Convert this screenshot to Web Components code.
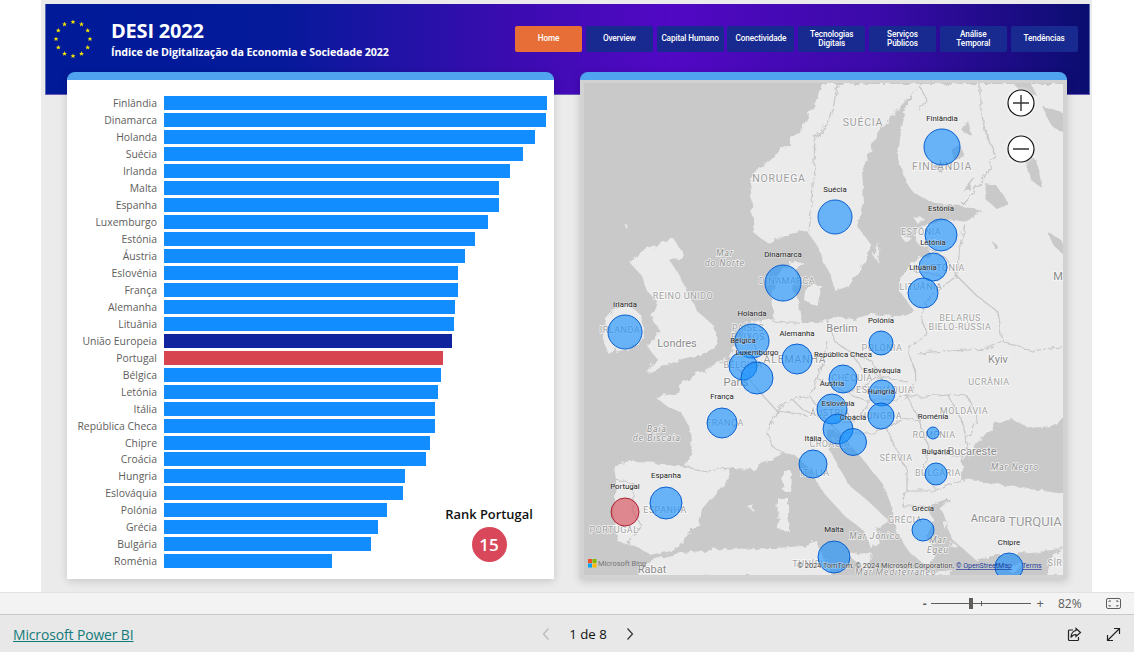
<!DOCTYPE html>
<html lang="pt">
<head>
<meta charset="utf-8">
<title>DESI 2022</title>
<style>
  html, body { margin: 0; height: 100%; background: #fff; overflow: hidden; }
  body { font-family: "Open Sans", "Noto Sans", sans-serif; }
</style>
</head>
<body>
<report-page>
  <desi-header slot="header"></desi-header>
  <bar-chart slot="left"></bar-chart>
  <europe-map slot="right"></europe-map>
  <zoom-bar slot="zoom"></zoom-bar>
  <report-footer slot="footer"></report-footer>
</report-page>

<script>
// components/ReportPage.js
class ReportPage extends HTMLElement {
  constructor() {
    super();
    this.attachShadow({ mode: 'open' });
    this.shadowRoot.innerHTML = `
      <style>
        :host { display: flex; flex-direction: column; height: 652px; }
        .canvas {
          height: 592px;
          margin: 0 42px 0 41px;
          background: #ebebeb;
          padding: 4px 2px 0 4px;
          box-sizing: border-box;
          overflow: hidden;
        }
        .panels {
          display: flex;
          gap: 26px;
          margin-top: -23px;
          padding-left: 22px;
          position: relative;
        }
      </style>
      <div class="canvas">
        <slot name="header"></slot>
        <div class="panels">
          <slot name="left"></slot>
          <slot name="right"></slot>
        </div>
      </div>
      <slot name="zoom"></slot>
      <slot name="footer"></slot>
    `;
  }
}

class DesiHeader extends HTMLElement {
  constructor() {
    super();
    this.attachShadow({ mode: 'open' });
    const stars = [];
    for (let i = 0; i < 12; i++) {
      const a = i * Math.PI / 6;
      stars.push(`<use href="#star" x="${(19 + 17 * Math.sin(a)).toFixed(1)}" y="${(19 - 17 * Math.cos(a)).toFixed(1)}"/>`);
    }
    const items = [['Home', 1], ['Overview'], ['Capital Humano'], ['Conectividade'], ['Tecnologias<br>Digitais'],
      ['Serviços<br>Públicos'], ['Análise<br>Temporal'], ['Tendências']];
    this.shadowRoot.innerHTML = `
      <style>
        :host {
          display: flex;
          align-items: flex-start;
          height: 91px;
          box-sizing: border-box;
          background: linear-gradient(90deg, #001a98 0%, #041a9a 22%, #3a0cb0 44%, #5208c4 60%, #3a0aa8 80%, #0a0d70 100%);
          border-left: 1px solid #5a6ab0;
          border-right: 1px solid #5a6ab0;
          border-bottom: 1px solid #6a5ab8;
          color: #fff;
        }
        svg { flex: none; width: 38px; height: 38px; margin: 16px 0 0 8px; fill: #f7e600; }
        .titles { margin: 16px 0 0 19px; width: 404px; flex: none; }
        h1 { margin: 0; font: 700 20px/22px "Open Sans", sans-serif; letter-spacing: -0.2px; }
        p { margin: 3px 0 0 0; font: 700 10.7px/15px "Open Sans", sans-serif; letter-spacing: -0.1px; white-space: nowrap; }
        nav { display: flex; gap: 3.8px; margin-top: 22px; }
      </style>
      <svg viewBox="0 0 38 38"><defs><path id="star" d="M0-2.6 .7-.8 2.5-.8 1.1 .3 1.6 2.1 0 1 -1.6 2.1 -1.1 .3 -2.5 -.8 -.7 -.8Z"/></defs>${stars.join('')}</svg>
      <div class="titles">
        <h1>DESI 2022</h1>
        <p>Índice de Digitalização da Economia e Sociedade 2022</p>
      </div>
      <nav>${items.map(i => `<nav-button ${i[1] ? 'active' : ''}>${i[0]}</nav-button>`).join('')}</nav>
    `;
  }
}

class NavButton extends HTMLElement {
  constructor() {
    super();
    this.attachShadow({ mode: 'open' });
    this.shadowRoot.innerHTML = `
      <style>
        :host {
          display: flex;
          align-items: center;
          justify-content: center;
          width: 67px;
          height: 26px;
          border-radius: 2px;
          background: #182a90;
          color: #fff;
          font: 500 8.2px/9.5px Roboto, sans-serif;
          letter-spacing: -0.1px;
          text-align: center;
        }
        :host([active]) { background: #e76f37; }
      </style>
      <slot></slot>
    `;
  }
}

class BarChart extends HTMLElement {
  constructor() {
    super();
    this.attachShadow({ mode: 'open' });
    const data = [['Finlândia', 547], ['Dinamarca', 546], ['Holanda', 535], ['Suécia', 523], ['Irlanda', 510], ['Malta', 499],
      ['Espanha', 499], ['Luxemburgo', 488], ['Estónia', 475], ['Áustria', 465], ['Eslovénia', 458], ['França', 458],
      ['Alemanha', 455], ['Lituânia', 454], ['União Europeia', 452, 'eu'], ['Portugal', 443, 'pt'], ['Bélgica', 441],
      ['Letónia', 438], ['Itália', 435], ['República Checa', 435], ['Chipre', 430], ['Croácia', 426], ['Hungria', 405],
      ['Eslováquia', 403], ['Polónia', 387], ['Grécia', 378], ['Bulgária', 371], ['Roménia', 332]];
    this.shadowRoot.innerHTML = `
      <style>
        :host {
          display: block;
          position: relative;
          flex: none;
          width: 487px;
          height: 507px;
          box-sizing: border-box;
          background: #fff;
          border-top: 8px solid #4fa3ef;
          border-radius: 8px 8px 0 0;
          box-shadow: 0 2px 9px rgba(0,0,0,.16);
          padding-top: 15px;
        }
        .rows { display: grid; grid-template-columns: 90px 1fr; column-gap: 7px; grid-auto-rows: 16.96px; align-items: center; }
        .label { text-align: right; font: 400 10.4px/14px "Open Sans", sans-serif; color: #605e5c; white-space: nowrap; }
        .bar { height: 14px; background: #118dff; }
        .bar.eu { background: #12239e; }
        .bar.pt { background: #d64550; }
        .rank { position: absolute; left: 370px; top: 426px; width: 104px; text-align: center; }
        .rank b { display: block; font: 600 12.9px/17px "Open Sans", sans-serif; color: #111; white-space: nowrap; }
        .rank span {
          display: flex; align-items: center; justify-content: center;
          width: 35px; height: 35px; margin: 4px auto 0;
          border-radius: 50%; background: #d9485a; color: #fff;
          font: 600 17px/1 "Open Sans", sans-serif;
        }
      </style>
      <div class="rows">
        ${data.map(d => `<div class="label">${d[0]}</div><div class="bar ${d[2] || ''}" style="width:${d[1] - 164}px"></div>`).join('')}
      </div>
      <div class="rank"><b>Rank Portugal</b><span>15</span></div>
    `;
  }
}

class EuropeMap extends HTMLElement {
  constructor() {
    super();
    this.attachShadow({ mode: 'open' });
    const land = [
      // mainland
      'M917 83 905 105 899 130 896 155 903 180 913 193 935 203 960 205 980 210 968 220 950 218 927 222 912 232 916 243 925 246 930 255 915 258 908 262 900 275 897 290 905 300 912 310 895 316 870 313 850 318 830 316 812 322 800 322 798 312 797 300 790 288 795 272 800 260 788 262 775 275 770 295 772 318 750 322 738 338 727 358 715 362 698 372 680 380 677 392 653 396 665 405 680 412 688 430 690 450 683 466 660 462 630 461 612 464 614 480 613 495 612 520 615 540 632 544 650 555 668 550 682 540 697 524 700 508 715 490 728 478 727 467 750 468 770 458 782 452 795 456 808 468 820 490 843 515 862 530 870 548 878 542 874 528 887 520 866 500 848 485 836 465 826 445 825 428 838 432 858 455 880 482 890 505 894 530 908 552 925 565 932 555 925 535 932 520 925 505 945 498 958 500 968 490 960 478 960 462 977 440 993 423 1010 418 1027 427 1050 425 1063 417 1063 83Z',
      // norway + sweden
      'M820 83 812 105 800 127 782 147 765 160 748 178 750 205 752 232 767 243 787 233 805 230 815 245 826 270 833 290 847 285 862 262 870 245 855 225 862 203 860 170 873 137 897 107 917 85 917 83Z',
      // turkey
      'M947 500 963 478 1000 484 1063 493 1063 547 1030 552 997 553 975 560 950 538 945 520 938 507Z',
      // great britain
      'M670 236 655 245 640 250 628 262 640 275 645 290 655 300 650 318 658 330 645 345 655 358 645 372 680 358 700 353 716 345 712 325 695 310 685 290 678 275 668 260 682 255 680 250Z',
      // ireland
      'M622 303 607 312 601 335 606 352 628 348 642 335 640 315 632 308Z',
      // north africa
      'M636 575 647 560 665 555 680 552 720 548 775 547 800 545 815 540 820 555 830 575Z',
      // islands
      'M845 553 870 552 865 570Z', 'M776 497 787 497 787 530 775 528Z', 'M782 470 789 470 788 491 781 490Z',
      'M1000 566 1022 561 1012 572Z', 'M920 572 950 569 948 574 922 575Z', 'M1050 552 1063 548 1063 575 1045 575Z',
      'M872 255 878 240 876 262Z', 'M805 285 820 285 815 305 803 300Z', 'M745 505 752 503 750 509Z', 'M622 224 626 222 625 228Z',
      'M910 215 922 217 916 223Z', 'M900 236 908 235 905 243Z', 'M940 520 946 522 944 530Z', 'M950 540 955 545 948 546Z'
    ];
    const lakes = [
      'M983 183 995 185 1007 203 995 208 985 200Z', 'M1023 150 1035 160 1040 187 1030 180 1025 168Z',
      'M1040 105 1063 112 1063 132 1050 125Z', 'M1012 83 1030 83 1035 95 1022 95Z', 'M960 190 972 175 968 188Z',
      'M950 150 958 145 962 155 952 160Z', 'M930 165 945 160 938 172Z', 'M960 130 966 120 970 135Z',
      'M1045 230 1060 240 1063 255 1052 245Z', 'M990 240 996 245 992 248Z'
    ];
    const borders = [
      'M835 83 832 103 828 120 813 137 812 163 810 203 807 230', 'M917 85 925 100 918 110',
      'M978 83 978 103 983 130 993 153 982 177 960 203', 'M962 222 958 245 955 275 975 295 995 310 1000 340',
      'M925 246 945 258 955 275', 'M912 270 940 275', 'M955 275 945 282 925 300 920 318 925 335 905 345 915 380',
      'M915 352 945 350 985 348 1000 340 1030 350 1063 345', 'M915 380 905 395 925 395 945 393 965 395 975 415 965 440',
      'M945 393 960 420 965 440 960 462', 'M895 400 905 395 918 420 928 452 960 455', 'M918 420 898 418 885 428 895 450 905 470 905 490',
      'M905 490 935 490 960 478', 'M905 490 900 505 925 505', 'M928 452 920 470 935 490',
      'M825 318 832 340 850 352 870 360 878 375 905 380', 'M850 352 860 368 878 375 868 382 845 392 830 385 815 378 822 355 825 340',
      'M845 392 865 400 880 398 895 400', 'M815 378 808 395 790 398 775 410 765 432 770 445 782 452',
      'M775 410 755 388 745 375 730 365 718 362', 'M745 375 755 360 752 340 745 330', 'M808 395 825 420 852 420 865 408 865 400',
      'M825 420 838 432 870 432 885 428', 'M682 466 705 470 727 467', 'M612 478 632 482 630 510 640 525 625 542',
      'M790 398 800 408 825 420', 'M775 410 790 412 805 415', 'M770 320 785 322 798 322'
    ];
    const L = (x, y, t, cls) => `<text x="${x}" y="${y}" class="${cls || 'c'}">${t}</text>`;
    const names = [
      [863,126,'SUÉCIA','m'],[779,182,'NORUEGA','m'],[942,170,'FINLÂNDIA','m'],[683,299,'REINO UNIDO'],[787,284,'DINAMARCA'],
      [620,333,'IRLANDA'],[677,347,'Londres','t'],[842,332,'Berlim','t'],[736,386,'Paris','t'],[748,331,'PAÍSES'],[748,340,'BAIXOS'],
      [795,363,'ALEMANHA','m'],[743,368,'BÉLGICA'],[725,426,'FRANÇA'],[665,513,'ESPANHA'],[614,533,'PORTUGAL'],
      [815,476,'ITÁLIA'],[830,447,'CROÁCIA'],[830,416,'ÁUSTRIA'],[852,381,'CHÉQUIA'],[885,393,'ESLOVÁQUIA'],[881,419,'HUNGRIA'],
      [882,351,'POLÓNIA'],[960,321,'BELARUS'],[960,330,'BIELO-RÚSSIA'],[921,235,'ESTÓNIA'],[945,271,'LETÓNIA'],[921,290,'LITUÂNIA'],
      [998,363,'Kyiv','t'],[989,385,'UCRÂNIA'],[964,414,'MOLDÁVIA'],[934,438,'ROMÉNIA'],[972,455,'Bucareste','t'],[896,461,'SÉRVIA'],
      [938,476,'BULGÁRIA'],[905,523,'GRÉCIA'],[988,522,'Ancara','t'],[1035,526,'TURQUIA','b'],[652,573,'Rabat','t'],[811,567,'TUNÍSIA'],
      [1058,280,'M','t'],[1055,566,'SÍR'],
      [725,256,'Mar','i'],[725,266,'do Norte','i'],[657,432,'Baía','i'],[657,441,'de Biscaia','i'],[1015,470,'Mar Negro','i'],
      [875,539,'Mar Jônico','i'],[938,543,'Mar','i'],[938,553,'Egeu','i'],[896,575,'Mar Mediterrâneo','i']
    ];
    const bubbles = [
      ['Finlândia',942,147,18,118],['Suécia',835,217,17,189],['Dinamarca',783,283,18,254],['Irlanda',625,332,17,304],
      ['Holanda',752,341,17,313],['Bélgica',743,366,14,340],['Luxemburgo',757,378,16,352],['Alemanha',797,359,15,333],
      ['República Checa',843,379,14,354],['Polónia',881,343,12,320],['Estónia',941,235,16,208],['Letónia',933,267,14,242],
      ['Lituânia',923,293,15,267],['Áustria',832,409,15,383],['Eslovénia',838,429,15,403],['Croácia',853,442,13.5,417],
      ['Eslováquia',882,393,13,370],['Hungria',881,416,13,391],['Roménia',933,433,6,416],['Bulgária',936,474,11,451],
      ['Grécia',923,530,11,508],['Itália',813,464,14,438],['França',722,423,15,396],['Espanha',666,503,16,475],
      ['Portugal',625,512,14,486,'pt'],['Malta',834,557,16,529],['Chipre',1009,567,14,542]
    ];
    this.shadowRoot.innerHTML = `
      <style>
        :host {
          display: block;
          flex: none;
          width: 487px;
          height: 507px;
          box-sizing: border-box;
          background: #d2d2d2;
          border-top: 8px solid #4fa3ef;
          border-radius: 8px 8px 0 0;
          box-shadow: 0 2px 9px rgba(0,0,0,.18);
        }
        svg { display: block; width: 487px; height: 499px; }
        text { font-family: Roboto, sans-serif; text-anchor: middle; paint-order: stroke; stroke: rgba(255,255,255,.75); stroke-width: 1.5px; }
        .c { font-size: 9px; letter-spacing: .5px; fill: #a2a2a2; }
        .m { font-size: 10.5px; letter-spacing: .8px; fill: #9c9c9c; }
        .t { font-size: 11px; fill: #8a8a8a; }
        .b { font-size: 13px; fill: #999; }
        .i { font-size: 8.5px; letter-spacing: 1px; font-style: italic; fill: #8f8f8f; }
        .n { font-size: 7.8px; fill: #222; stroke: rgba(255,255,255,.45); stroke-width: 1px; }
        .border { fill: none; stroke: #c6c6c6; stroke-width: 1.2; stroke-linejoin: round; }
        .bubble { fill: #118dff; fill-opacity: .6; stroke: #0a5fd0; stroke-width: 1; }
        .bubble.pt { fill: #d64550; stroke: #ab2334; }
        .copy { font-size: 7.3px; text-anchor: end; fill: #444; stroke: rgba(255,255,255,.6); stroke-width: 1px; }
        .link { font-size: 7px; text-anchor: start; fill: #1a3a9c; text-decoration: underline; stroke: none; }
        .bing { font-size: 7.4px; text-anchor: start; fill: #777; stroke: none; }
      </style>
      <svg viewBox="580 80 487 499">
        <defs>
          <clipPath id="clip"><rect x="584" y="83" width="479" height="492"/></clipPath>
          <filter id="rough" x="-2%" y="-2%" width="104%" height="104%">
            <feTurbulence type="fractalNoise" baseFrequency=".12" numOctaves="3" seed="4"/>
            <feDisplacementMap in="SourceGraphic" scale="7"/>
          </filter>
        </defs>
        <g clip-path="url(#clip)">
          <rect x="584" y="83" width="479" height="492" fill="#c9c9c9"/>
          <g filter="url(#rough)" transform="translate(2 1)">
            <g fill="#ebebeb">${land.map(d => `<path d="${d}"/>`).join('')}</g>
            <g fill="#c9c9c9">${lakes.map(d => `<path d="${d}"/>`).join('')}</g>
            <g class="border">${borders.map(d => `<path d="M${d.slice(1)}"/>`).join('')}</g>
          </g>
          ${names.map(n => L(n[0], n[1], n[2], n[3])).join('')}
          ${bubbles.map(b => `<circle class="bubble ${b[5] || ''}" cx="${b[1]}" cy="${b[2]}" r="${b[3]}"/>`).join('')}
          ${bubbles.map(b => L(b[1], b[4] + 3, b[0], 'n')).join('')}
          <text class="copy" x="954" y="568">© 2024 TomTom, © 2024 Microsoft Corporation,</text>
          <text class="link" x="956" y="568">© OpenStreetMap</text>
          <text class="link" x="1022" y="568">Terms</text>
          <rect x="588" y="559" width="4" height="4" fill="#f25022"/><rect x="592.5" y="559" width="4" height="4" fill="#7fba00"/>
          <rect x="588" y="563.5" width="4" height="4" fill="#00a4ef"/><rect x="592.5" y="563.5" width="4" height="4" fill="#ffb900"/>
          <text class="bing" x="598" y="566">Microsoft Bing</text>
        </g>
        <g fill="#fff" stroke="#111" stroke-width="1.2" style="filter:drop-shadow(0 0 2px rgba(255,255,255,.8))">
          <circle cx="1021" cy="103" r="13"/><circle cx="1021" cy="149" r="13"/>
          <path d="M1013 103H1029M1021 95V111M1013 149H1029" fill="none" stroke="#333" stroke-width="1.4"/>
        </g>
      </svg>
    `;
  }
}

class ZoomBar extends HTMLElement {
  constructor() {
    super();
    this.attachShadow({ mode: 'open' });
    this.shadowRoot.innerHTML = `
      <style>
        :host {
          display: flex;
          align-items: center;
          justify-content: flex-end;
          height: 23px;
          box-sizing: border-box;
          background: #f3f3f3;
          border-top: 1px solid #e1e1e1;
          border-bottom: 1px solid #c8c8c8;
          color: #605e5c;
          font: 400 12px/1 "Open Sans", sans-serif;
          padding-right: 13px;
        }
        .minus { font-weight: 700; margin-right: 4px; }
        .track { position: relative; width: 100px; height: 1px; background: #605e5c; }
        .thumb { position: absolute; left: 38px; top: -5px; width: 4px; height: 11px; background: #605e5c; }
        .tick { position: absolute; left: 50px; top: -2px; width: 1px; height: 5px; background: #605e5c; }
        .plus { margin-left: 6px; font-size: 13px; }
        .pct { margin-left: 14px; width: 33px; }
        svg { margin-left: 15px; width: 15px; height: 11px; }
      </style>
      <span class="minus">-</span>
      <div class="track"><div class="tick"></div><div class="thumb"></div></div>
      <span class="plus">+</span>
      <span class="pct">82%</span>
      <svg viewBox="0 0 15 11" fill="none" stroke="#605e5c"><rect x=".5" y=".5" width="14" height="10" rx="1.5"/><path d="M3 4V3H5M10 3H12V4M12 7V8H10M5 8H3V7"/></svg>
    `;
  }
}

class ReportFooter extends HTMLElement {
  constructor() {
    super();
    this.attachShadow({ mode: 'open' });
    this.shadowRoot.innerHTML = `
      <style>
        :host {
          display: grid;
          grid-template-columns: 1fr auto 1fr;
          align-items: center;
          height: 37px;
          box-sizing: border-box;
          background: #e8e8e8;
          padding: 2px 13px 0;
          font: 400 13.9px/1 "Open Sans", sans-serif;
        }
        a { color: #117a7a; text-decoration: underline; white-space: nowrap; letter-spacing: -0.1px; }
        .pager { display: flex; align-items: center; gap: 19px; color: #111; font-size: 13.2px; margin-left: 42px; }
        .pager svg { width: 8px; height: 12px; fill: none; stroke-width: 1.2; }
        .tools { display: flex; justify-content: flex-end; gap: 24px; }
        .tools svg { width: 15px; height: 15px; fill: none; stroke: #222; stroke-width: 1.2; }
      </style>
      <a href="#">Microsoft Power BI</a>
      <div class="pager">
        <svg viewBox="0 0 8 12" stroke="#b8b8b8"><path d="M6.5 .5 1.5 6 6.5 11.5"/></svg>
        <span>1 de 8</span>
        <svg viewBox="0 0 8 12" stroke="#333"><path d="M1.5 .5 6.5 6 1.5 11.5"/></svg>
      </div>
      <div class="tools">
        <svg viewBox="0 0 15 15"><path d="M6 3H2.5A1 1 0 0 0 1.5 4V12.5A1 1 0 0 0 2.5 13.5H10.5A1 1 0 0 0 11.5 12.5V10"/><path d="M9 1.5 13.5 5.5 9 9.5V7.5C6.5 7.5 5 8.5 4 10.5 4 7 6 4 9 3.5Z"/></svg>
        <svg viewBox="0 0 15 15"><path d="M1.5 13.5 13.5 1.5M8 1.5H13.5V7M1.5 8V13.5H7"/></svg>
      </div>
    `;
  }
}

customElements.define('report-page', ReportPage);
customElements.define('desi-header', DesiHeader);
customElements.define('nav-button', NavButton);
customElements.define('bar-chart', BarChart);
customElements.define('europe-map', EuropeMap);
customElements.define('zoom-bar', ZoomBar);
customElements.define('report-footer', ReportFooter);
</script>
</body>
</html>
